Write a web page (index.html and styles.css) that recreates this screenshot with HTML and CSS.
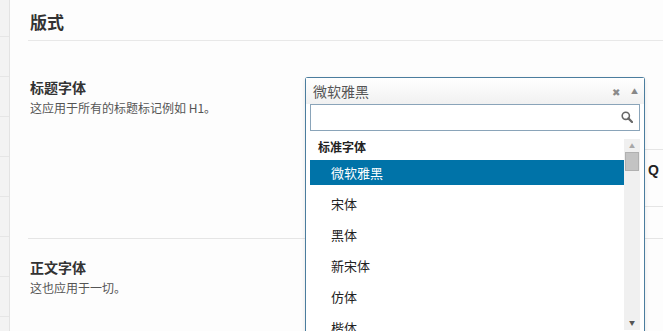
FILE: index.html
```html
<!DOCTYPE html>
<html lang="zh-CN">
<head>
    <meta charset="UTF-8">
    <meta name="viewport" content="width=device-width, initial-scale=1.0">
    <title>版式</title>
    <link rel="stylesheet" href="styles.css">
</head>
<body>
    <div class="wrap">
        <aside class="side">
            <div class="side-item"></div>
            <div class="side-item"></div>
            <div class="side-item"></div>
            <div class="side-item"></div>
            <div class="side-item"></div>
            <div class="side-item"></div>
            <div class="side-item"></div>
            <div class="side-item"></div>
        </aside>

        <main class="main">
            <h2 class="title">版式</h2>

            <section class="row">
                <div class="label">
                    <h3>标题字体</h3>
                    <p>这应用于所有的标题标记例如 H1。</p>
                </div>
                <div class="field">
                    <div class="preview">
                        <div class="preview-line">Q</div>
                        <div class="preview-line"></div>
                    </div>

                    <div class="select">
                        <div class="select-head">
                            <span class="select-value">微软雅黑</span>
                            <span class="select-clear">&#x2716;</span>
                            <span class="select-arrow">&#x25B2;</span>
                        </div>
                        <div class="select-search">
                            <input type="text">
                            <svg class="search-icon" width="12" height="12" viewBox="0 0 12 12">
                                <circle cx="4.8" cy="4.8" r="3.6" fill="none" stroke="#666" stroke-width="1.6"/>
                                <path d="M7.4 7.4 L11 11" stroke="#666" stroke-width="2.2" stroke-linecap="round"/>
                            </svg>
                        </div>
                        <div class="results">
                            <ul class="options">
                                <li class="group">标准字体</li>
                                <li class="option active">微软雅黑</li>
                                <li class="option">宋体</li>
                                <li class="option">黑体</li>
                                <li class="option">新宋体</li>
                                <li class="option">仿体</li>
                                <li class="option">楷体</li>
                            </ul>
                            <div class="scrollbar">
                                <span class="scroll-up">&#x25B2;</span>
                                <span class="scroll-thumb"></span>
                                <span class="scroll-down">&#x25BC;</span>
                            </div>
                        </div>
                    </div>
                </div>
            </section>

            <section class="row row-body">
                <div class="label">
                    <h3>正文字体</h3>
                    <p>这也应用于一切。</p>
                </div>
                <div class="field"></div>
            </section>
        </main>
    </div>
</body>
</html>
```

FILE: styles.css
```css
html, body {
    margin: 0;
    padding: 0;
    height: 100%;
    overflow: hidden;
}

body {
    font-family: "Noto Sans CJK SC", "Liberation Sans", sans-serif;
    background: #fdfdfd;
    color: #222;
}

.wrap {
    display: flex;
    min-height: 100vh;
}

.side {
    width: 9px;
    flex-shrink: 0;
    background: #f3f3f3;
    border-right: 1px solid #e3e3e3;
}

.side-item {
    height: 39px;
    border-bottom: 1px solid #e6e6e6;
}

.side-item:first-child {
    height: 36px;
}

.main {
    flex: 1;
    margin-left: 18px;
}

.title {
    margin: 0;
    padding: 10px 0 6px 2px;
    font-size: 17px;
    line-height: 24px;
    font-weight: bold;
    color: #333;
    border-bottom: 1px solid #e8e8e8;
}

.row {
    display: flex;
    padding-top: 36px;
    height: 161px;
    border-bottom: 1px solid #e5e5e5;
}

.row-body {
    padding-top: 18px;
    border-bottom: none;
}

.label {
    width: 275px;
    flex-shrink: 0;
    padding-left: 2px;
}

.label h3 {
    margin: 0;
    font-size: 14px;
    line-height: 20px;
    font-weight: bold;
    color: #333;
}

.label p {
    margin: 2px 0 0;
    font-size: 12px;
    line-height: 18px;
    color: #555;
}

.field {
    flex: 1;
    position: relative;
}

.preview {
    margin-top: 72px;
    border-top: 1px solid #e5e5e5;
}

.preview-line {
    height: 56px;
    padding-left: 343px;
    border-bottom: 1px solid #e5e5e5;
    font-family: "Liberation Sans", sans-serif;
    font-size: 14px;
    font-weight: bold;
    line-height: 40px;
    color: #222;
}

.preview-line + .preview-line {
    height: 30px;
    border-bottom: none;
}

/* dropdown lies over the preview */
.select {
    position: absolute;
    top: 0;
    left: 0;
    width: 338px;
    height: 300px;
    background: #fff;
    border: 1px solid #4b7d9e;
    border-bottom: none;
    border-radius: 3px 3px 0 0;
    box-shadow: 0 2px 4px rgba(0, 0, 0, 0.1);
}

.select-head {
    display: flex;
    align-items: center;
    height: 26px;
    padding: 0 6px 0 7px;
    background: linear-gradient(#ffffff, #f1f1f1);
}

.select-value {
    flex: 1;
    font-size: 14px;
    color: #555;
}

.select-clear {
    font-size: 10px;
    color: #8a8a8a;
    margin-right: 11px;
}

.select-arrow {
    font-size: 7px;
    color: #888;
}

.select-search {
    position: relative;
    margin: 0 4px;
}

.select-search input {
    display: block;
    box-sizing: border-box;
    width: 330px;
    height: 27px;
    margin: 0;
    border: 1px solid #8aa4b9;
    background: #fff;
    outline: none;
}

.search-icon {
    position: absolute;
    right: 7px;
    top: 7px;
}

.results {
    display: flex;
    margin: 8px 4px 0;
}

.options {
    flex: 1;
    list-style: none;
    margin: 0;
    padding: 0;
}

.group {
    height: 21px;
    padding-left: 8px;
    font-size: 12px;
    line-height: 16px;
    font-weight: bold;
    color: #222;
}

.option {
    height: 25px;
    margin-bottom: 6px;
    padding-left: 21px;
    font-size: 13px;
    line-height: 25px;
    color: #222;
}

.option.active {
    background: #0073a8;
    color: #fff;
}

.scrollbar {
    position: relative;
    width: 16px;
    height: 191px;
    background: #f0f0f0;
}

.scroll-up,
.scroll-down {
    position: absolute;
    left: 5px;
    font-size: 6px;
    color: #a8a8a8;
}

.scroll-up {
    top: 2px;
}

.scroll-down {
    bottom: 3px;
    color: #555;
}

.scroll-thumb {
    position: absolute;
    left: 1px;
    top: 13px;
    width: 12px;
    height: 17px;
    background: #c3c3c3;
    border: 1px solid #b0b0b0;
}
```
